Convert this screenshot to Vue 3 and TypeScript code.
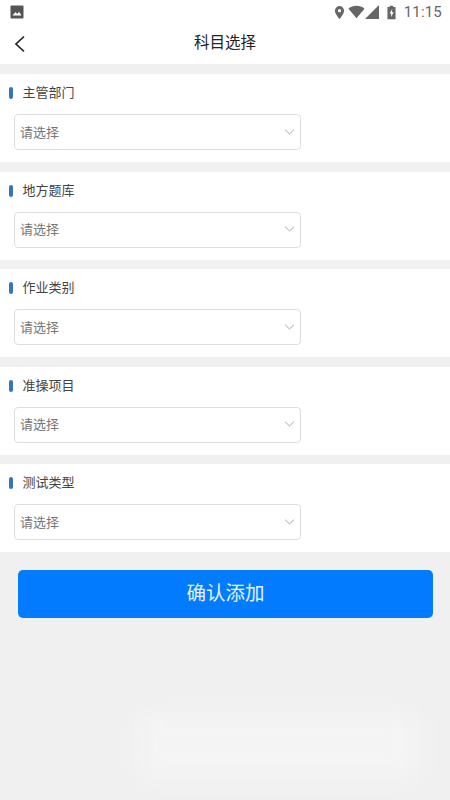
<script setup lang="ts">
const sections: string[] = ['主管部门', '地方题库', '作业类别', '准操项目', '测试类型']
</script>

<template>
  <div class="page">
    <div class="status">
      <svg class="pic" viewBox="0 0 14 14" width="14" height="14">
        <rect x="0.5" y="0.5" width="13" height="13" rx="1" fill="#555" />
        <path d="M2.5 10.5 L5.5 7 L7.2 9 L9 6.8 L11.5 10.5 Z" fill="#fff" />
      </svg>
      <div class="status-right">
        <svg viewBox="0 0 12 16" width="11" height="15">
          <path fill-rule="evenodd" d="M6 1a5 5 0 0 0-5 5c0 3.6 5 9 5 9s5-5.400 5-9a5 5 0 0 0-5-5zm0 3.200a1.800 1.800 0 1 1 0 3.600a1.800 1.800 0 0 1 0-3.600z" fill="#666" />
        </svg>
        <svg class="wifi" viewBox="0 0 18 14" width="17" height="14">
          <path d="M0.500 3.500C5.200-0.500 12.800-0.500 17.500 3.500L9 13.500Z" fill="#666" />
        </svg>
        <svg class="signal" viewBox="0 0 14 14" width="14" height="14">
          <path d="M14 0V14H0Z" fill="#666" />
        </svg>
        <svg class="battery" viewBox="0 0 10 16" width="9" height="15">
          <path fill-rule="evenodd" d="M3 0.500H7V2H9.500V15.500H0.500V2H3ZM5.800 4L2.800 9H4.600V13L7.400 7.800H5.600Z" fill="#666" />
        </svg>
        <span class="time">11:15</span>
      </div>
    </div>

    <header class="nav">
      <svg class="back" viewBox="0 0 12 18" width="12" height="18">
        <path d="M10 1.500L2 9L10 16.500" fill="none" stroke="#222" stroke-width="1.700" />
      </svg>
      <h1 class="title">科目选择</h1>
    </header>

    <main class="list">
      <section v-for="name in sections" :key="name" class="card">
        <div class="label"><i class="mark"></i><span class="label-text">{{ name }}</span></div>
        <div class="select">
          <span class="placeholder">请选择</span>
          <svg class="chevron" viewBox="0 0 12 7" width="11" height="6">
            <path d="M0.800 0.800L6 5.800L11.200 0.800" fill="none" stroke="#a0a0a0" stroke-width="1.100" />
          </svg>
        </div>
      </section>
    </main>

    <button class="confirm" type="button"><span class="confirm-text">确认添加</span></button>

    <div class="smudge"></div>
  </div>
</template>

<style>
html, body { margin: 0; background: #f0f0f0; }
</style>

<style scoped>
.page {
  position: relative;
  width: 450px;
  height: 800px;
  overflow: hidden;
  background: #f0f0f0;
  display: flex;
  flex-direction: column;
  font-family: "Noto Sans CJK SC", "Noto Sans", sans-serif;
}
.status {
  height: 24px;
  background: #fff;
  display: flex;
  align-items: center;
  justify-content: space-between;
  padding: 0 8px 0 10px;
  box-sizing: border-box;
}
.pic { margin-top: -1px; }
.status-right { display: flex; align-items: center; }
.wifi { margin-left: 3px; }
.signal { margin-left: 0; }
.battery { margin-left: 8px; }
.time {
  margin-left: 8px;
  font-family: Roboto, sans-serif;
  font-size: 15px;
  letter-spacing: 0.2px;
  color: #666;
}
.nav {
  height: 40px;
  background: #fff;
  position: relative;
  display: flex;
  align-items: center;
  justify-content: center;
}
.back { position: absolute; left: 14px; top: 11px; }
.title {
  margin: -6px 0 0;
  font-size: 15.500px;
  font-weight: 400;
  color: #222;
}
.list {
  margin-top: 10px;
  display: flex;
  flex-direction: column;
  gap: 9.500px;
}
.card {
  height: 88px;
  background: #fff;
  box-sizing: border-box;
  padding: 10px 0 0 9px;
}
.label {
  display: flex;
  align-items: center;
  height: 18px;
  font-size: 13px;
  color: #444;
}
.label-text { margin: -3px 0 0 -0.5px; }
.mark {
  width: 4px;
  height: 12px;
  border-radius: 2px;
  background: #3a74b8;
  margin-right: 10px;
}
.select {
  margin: 12px 0 0 5px;
  width: 287px;
  height: 36px;
  box-sizing: border-box;
  border: 1px solid #dedede;
  border-radius: 4px;
  background: #fff;
  display: flex;
  align-items: center;
  justify-content: space-between;
  padding: 0 5px 0 5px;
  font-size: 13px;
  color: #777;
}
.placeholder { margin-top: -2px; }
.chevron { margin-top: -1px; }
.confirm {
  margin: 18px 17px 0 18px;
  height: 48px;
  border: 0;
  border-radius: 5px;
  background: #027bfe;
  color: #e4f4ff;
  font-family: inherit;
  font-size: 19.500px;
  padding: 0;
}
.confirm-text { position: relative; top: -3px; }
.smudge {
  position: absolute;
  left: 135px;
  top: 712px;
  width: 285px;
  height: 68px;
  background: #f4f4f4;
  filter: blur(12px);
}
</style>
